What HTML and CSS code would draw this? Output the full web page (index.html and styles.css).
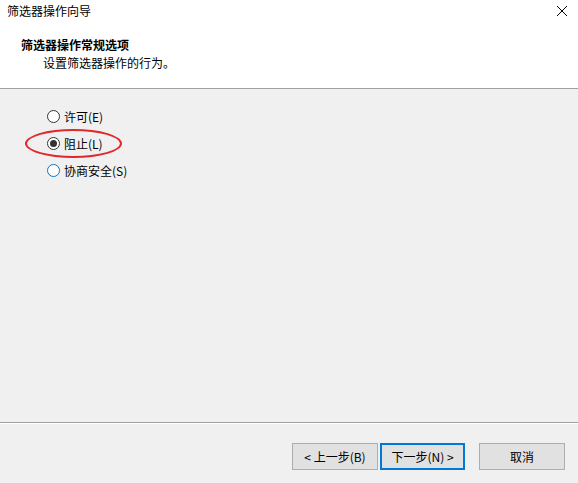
FILE: index.html
```html
<!DOCTYPE html>
<html lang="zh-CN">
<head>
    <meta charset="UTF-8">
    <title>筛选器操作向导</title>
    <link rel="stylesheet" href="styles.css">
</head>
<body>
    <div class="wizard">
        <!-- Title bar -->
        <div class="title-bar">
            <span class="title-text">筛选器操作向导</span>
            <svg class="close-icon" width="12" height="12" viewBox="0 0 12 12">
                <path d="M1 1 L11 11 M11 1 L1 11" stroke="#000" stroke-width="1" fill="none"/>
            </svg>
        </div>

        <!-- Header -->
        <div class="wizard-header">
            <div class="header-title">筛选器操作常规选项</div>
            <div class="header-subtitle">设置筛选器操作的行为。</div>
        </div>

        <!-- Body -->
        <div class="wizard-body">
            <div class="radio-group">
                <label class="radio-row">
                    <span class="radio"></span>
                    <span class="radio-label">许可(E)</span>
                </label>
                <label class="radio-row">
                    <span class="radio checked"></span>
                    <span class="radio-label">阻止(L)</span>
                </label>
                <label class="radio-row">
                    <span class="radio focus"></span>
                    <span class="radio-label">协商安全(S)</span>
                </label>
            </div>
            <div class="highlight-ring"></div>
        </div>

        <!-- Footer -->
        <div class="wizard-footer">
            <button class="btn">&lt; 上一步(B)</button>
            <button class="btn btn-default">下一步(N) &gt;</button>
            <button class="btn btn-cancel">取消</button>
        </div>
    </div>
</body>
</html>
```

FILE: styles.css
```css
* {
    margin: 0;
    padding: 0;
    box-sizing: border-box;
}

body {
    font-family: "Noto Sans CJK SC", "Liberation Sans", sans-serif;
    font-size: 12px;
    color: #000000;
    background-color: #f0f0f0;
    width: 578px;
    height: 483px;
    overflow: hidden;
}

.wizard {
    display: flex;
    flex-direction: column;
    height: 483px;
}

.title-bar {
    height: 24px;
    background-color: #ffffff;
    display: flex;
    align-items: center;
    justify-content: space-between;
    padding: 0 10px 0 7px;
}

.title-text {
    font-size: 12px;
    line-height: 16px;
    margin-top: -2px;
}

.close-icon {
    margin-top: -2px;
}

.wizard-header {
    height: 65px;
    background-color: #ffffff;
    border-bottom: 1px solid #a0a0a0;
    padding: 12px 0 0 21px;
}

.header-title {
    font-weight: bold;
    line-height: 18px;
}

.header-subtitle {
    padding-left: 22px;
    line-height: 18px;
}

.wizard-body {
    flex: 1;
    position: relative;
    padding: 19px 0 0 47px;
    border-bottom: 1px solid #a0a0a0;
}

.radio-group {
    display: flex;
    flex-direction: column;
    gap: 10px;
}

.radio-row {
    display: flex;
    align-items: center;
    height: 17px;
}

.radio {
    width: 13px;
    height: 13px;
    border: 1px solid #333333;
    border-radius: 50%;
    background-color: #ffffff;
    margin-right: 4px;
    position: relative;
}

.radio.checked::after {
    content: "";
    position: absolute;
    left: 2px;
    top: 2px;
    width: 7px;
    height: 7px;
    border-radius: 50%;
    background-color: #333333;
}

.radio.focus {
    border-color: #0078d7;
}

.radio-label {
    line-height: 17px;
}

.highlight-ring {
    position: absolute;
    left: 25px;
    top: 40px;
    width: 97px;
    height: 29px;
    border: 2.5px solid #e0292b;
    border-radius: 50%;
}

.wizard-footer {
    height: 60px;
    border-top: 1px solid #ffffff;
    display: flex;
    align-items: flex-start;
    padding: 19px 0 0 292px;
}

.btn {
    font-family: inherit;
    font-size: 12px;
    width: 86px;
    height: 27px;
    background-color: #e1e1e1;
    border: 1px solid #adadad;
    color: #000000;
}

.btn-default {
    margin-left: 2px;
    width: 85px;
    border: 2px solid #0078d7;
}

.btn-cancel {
    margin-left: 14px;
}
```
